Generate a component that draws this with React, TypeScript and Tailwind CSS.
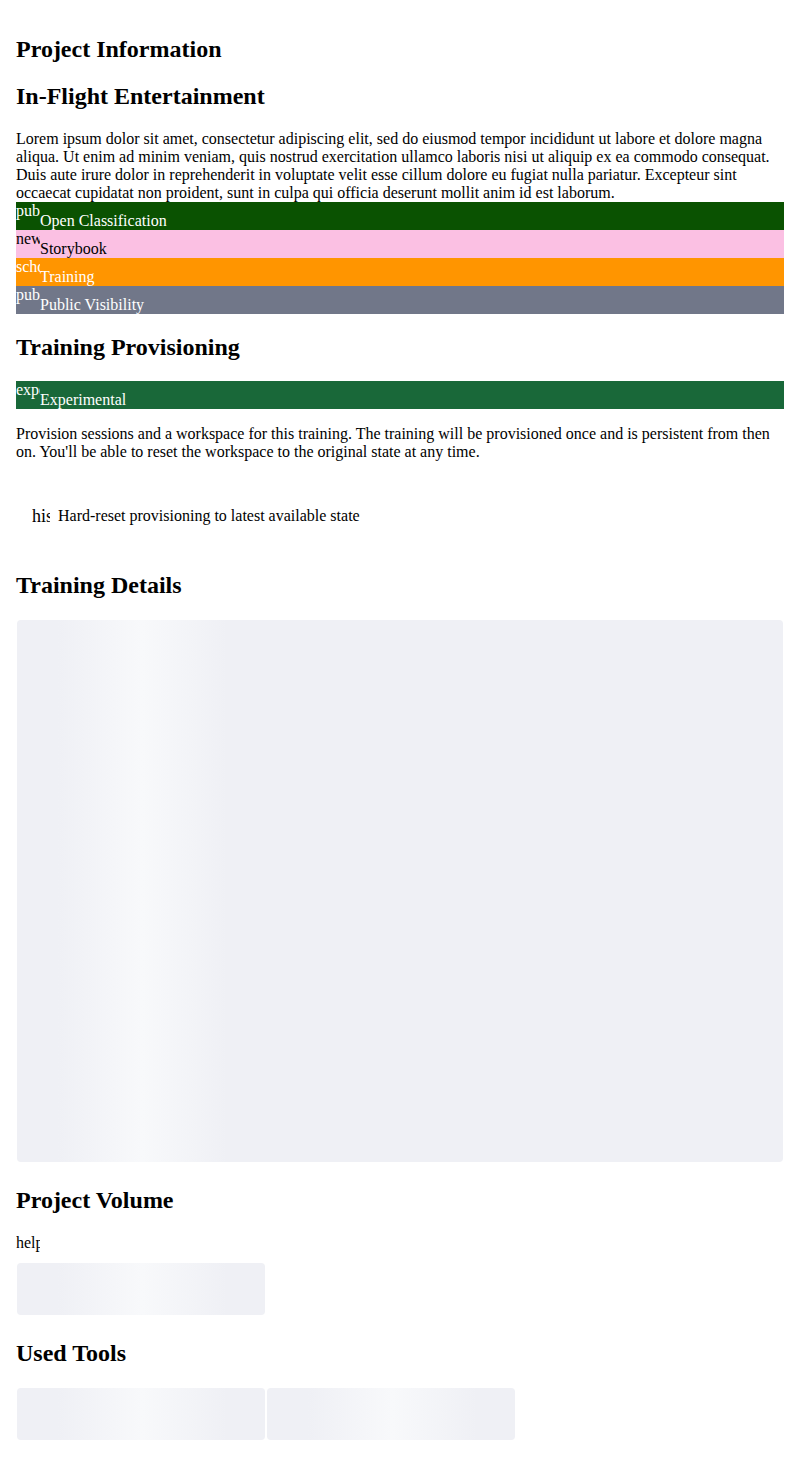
const heading = "my-[0.83em] text-[24px] font-bold leading-[normal]";
const shimmer =
  "m-px inline-block rounded bg-[#eff0f5] bg-[linear-gradient(90deg,#eff0f5_40px,#f8f9fb_125px,#eff0f5_210px)] align-baseline";

const badges = [
  { icon: "public", label: "Open Classification", cls: "bg-[#0a5201] text-white" },
  { icon: "new_releases", label: "Storybook", cls: "bg-[#fbc0e3] text-black" },
  { icon: "school", label: "Training", cls: "bg-[#ff9500] text-white" },
  { icon: "public", label: "Public Visibility", cls: "bg-[#717789] text-white" },
];

function Icon({ name }: { name: string }) {
  return (
    <span className="inline-block h-6 w-6 overflow-hidden whitespace-nowrap align-baseline">
      {name}
    </span>
  );
}

function Badge({ icon, label, cls }: { icon: string; label: string; cls: string }) {
  return (
    <div className={cls}>
      <Icon name={icon} />
      {label}
    </div>
  );
}

export default function App() {
  return (
    <div className="bg-white p-4 font-['Liberation_Serif',serif] text-[16px] leading-[normal] text-black">
      <h2 className={heading}>Project Information</h2>
      <h2 className={heading}>In-Flight Entertainment</h2>
      <div>
        Lorem ipsum dolor sit amet, consectetur adipiscing elit, sed do eiusmod tempor
        incididunt ut labore et dolore magna aliqua. Ut enim ad minim veniam, quis nostrud
        exercitation ullamco laboris nisi ut aliquip ex ea commodo consequat. Duis aute irure
        dolor in reprehenderit in voluptate velit esse cillum dolore eu fugiat nulla pariatur.
        Excepteur sint occaecat cupidatat non proident, sunt in culpa qui officia deserunt
        mollit anim id est laborum.
      </div>
      {badges.map((b, i) => (
        <Badge key={i} {...b} />
      ))}

      <h2 className={heading}>Training Provisioning</h2>
      <Badge icon="experiment" label="Experimental" cls="bg-[#196839] text-white" />
      <p className="my-4">
        Provision sessions and a workspace for this training. The training will be provisioned
        once and is persistent from then on. You'll be able to reset the workspace to the
        original state at any time.
      </p>
      <div className="flex h-[76px] items-center pt-[3px]">
        <button type="button" className="flex items-center gap-2 px-4">
          <span className="w-[18px] overflow-hidden whitespace-nowrap text-[18px]">history</span>
          <span className="text-[16px]">Hard-reset provisioning to latest available state</span>
        </button>
      </div>

      <h2 className={heading}>Training Details</h2>
      <div>
        <span className={`${shimmer} h-[542px] w-[calc(100%-2px)]`} />
      </div>

      <h2 className={heading}>Project Volume</h2>
      <div>
        <Icon name="help" />
      </div>
      <div>
        <span className={`${shimmer} h-[52px] w-[248px]`} />
      </div>

      <h2 className={heading}>Used Tools</h2>
      <div>
        <span className={`${shimmer} h-[52px] w-[248px]`} />
        <span className={`${shimmer} h-[52px] w-[248px]`} />
      </div>
    </div>
  );
}
